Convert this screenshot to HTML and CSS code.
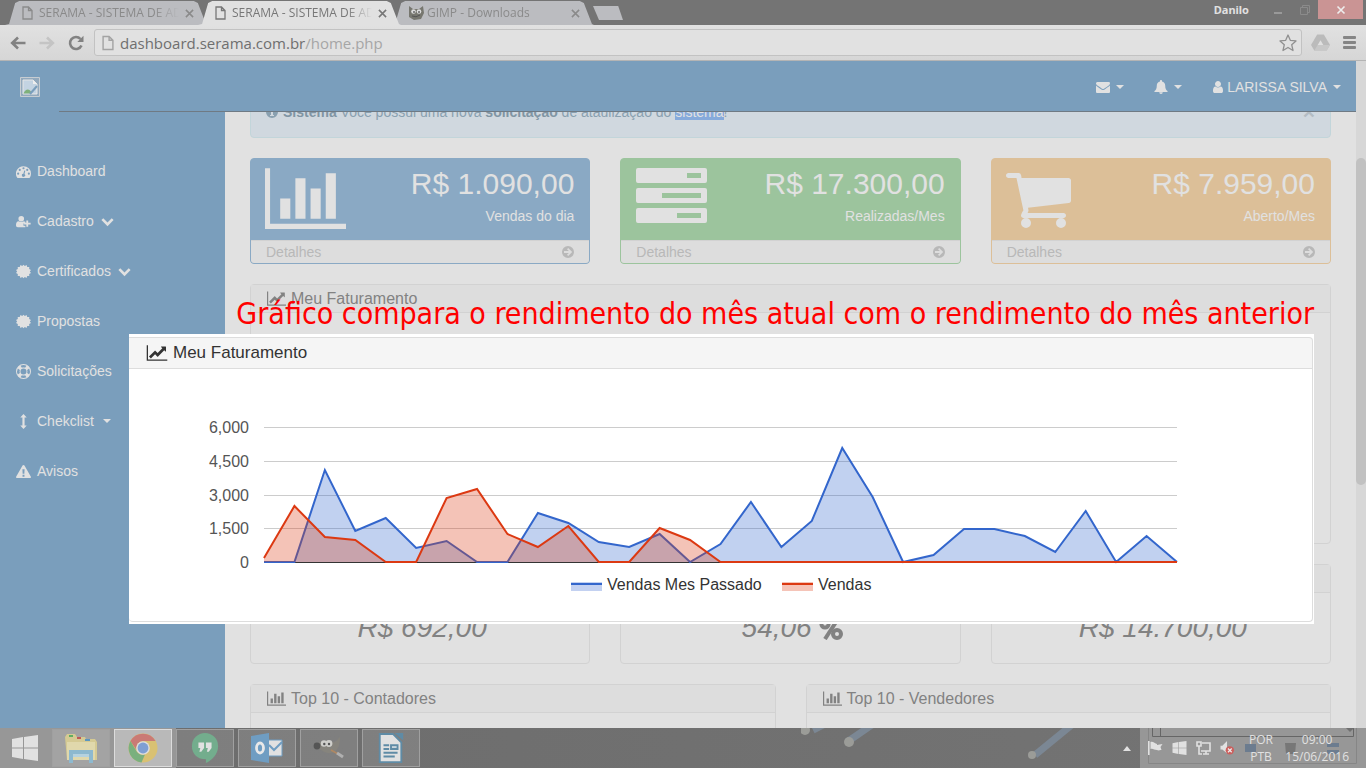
FILE: index.html
```html
<!DOCTYPE html>
<html lang="pt-BR">
<head>
<meta charset="utf-8">
<title>SERAMA - SISTEMA DE ADMINISTRAÇÃO</title>
<link rel="stylesheet" href="styles.css">
</head>
<body>
<svg class="defs" aria-hidden="true">
  <symbol id="bars" viewBox="0 0 2048 1792"><path d="M640 896v512h-256v-512h256zm384-512v1024h-256v-1024h256zm1024 1152v128h-2048v-1536h128v1408h1920zm-640-896v768h-256v-768h256zm384-384v1152h-256v-1152h256z"/></symbol>
  <symbol id="line" viewBox="0 0 2048 1792"><path d="M2048 1536v128h-2048v-1536h128v1408h1920zm-128-1248v435q0 21-19.5 29.5t-35.5-7.5l-121-121-633 633q-10 10-23 10t-23-10l-233-233-416 416-192-192 585-585q10-10 23-10t23 10l233 233 464-464-121-121q-16-16-7.5-35.5t29.5-19.5h435q14 0 23 9t9 23z"/></symbol>
  <symbol id="tasks" viewBox="0 0 71 55"><path fill-rule="evenodd" d="M2 0h67a2 2 0 0 1 2 2v11a2 2 0 0 1-2 2H2a2 2 0 0 1-2-2V2a2 2 0 0 1 2-2zM51 5v5h14V5zM2 20h67a2 2 0 0 1 2 2v11a2 2 0 0 1-2 2H2a2 2 0 0 1-2-2V22a2 2 0 0 1 2-2zM26 25v5h39v-5zM2 40h67a2 2 0 0 1 2 2v11a2 2 0 0 1-2 2H2a2 2 0 0 1-2-2V42a2 2 0 0 1 2-2zM41 45v5h24v-5z"/></symbol>
  <symbol id="cart" viewBox="64 0 1792 1792"><path d="M704 1536q0 52-38 90t-90 38-90-38-38-90 38-90 90-38 90 38 38 90zm896 0q0 52-38 90t-90 38-90-38-38-90 38-90 90-38 90 38 38 90zm128-1088v512q0 24-16.500 42.500t-40.500 21.500l-1044 122q13 60 13 70 0 16-24 64h920q26 0 45 19t19 45-19 45-45 19h-1024q-26 0-45-19t-19-45q0-11 8-31.500t16-36 21.500-40 15.500-29.500l-177-823h-204q-26 0-45-19t-19-45 19-45 45-19h256q16 0 28.500 6.500t19.500 15.500 13 24.500 8 26 5.500 29.500 4.500 26h1201q26 0 45 19t19 45z"/></symbol>
  <symbol id="go" viewBox="0 0 14 14"><path fill-rule="evenodd" d="M7 1a6 6 0 1 1 0 12A6 6 0 0 1 7 1zM7.200 3 6 4.200l1.900 1.900H3v1.800h4.900L6 9.800 7.200 11l4-4z"/></symbol>
  <symbol id="envelope" viewBox="0 0 1792 1792"><path d="M1792 710v794q0 66-47 113t-113 47h-1472q-66 0-113-47t-47-113v-794q44 49 101 87 362 246 497 345 57 42 92.500 65.500t94.500 48 110 24.500h2q51 0 110-24.500t94.500-48 92.500-65.500q170-123 498-345 57-39 100-87zm0-294q0 79-49 151t-122 123q-376 261-468 325-10 7-42.500 31t-54 38.500-52 32.500-57.500 27-50 9h-2q-23 0-50-9t-57.500-27-52-32.500-54-38.500-42.500-31q-91-64-262-182.500t-205-142.500q-62-42-117-115.500t-55-136.500q0-78 41.500-130t118.500-52h1472q65 0 112.500 47t47.500 113z"/></symbol>
  <symbol id="bell" viewBox="0 0 14 14"><path d="M7 0c.6 0 1 .4 1 1v.4c2 .4 3.200 2 3.200 4 0 3 .8 4.400 2.300 5.600.3.500 0 1-.5 1H1c-.5 0-.8-.5-.5-1C2 9.800 2.800 8.400 2.800 5.400c0-2 1.200-3.600 3.200-4V1c0-.6.400-1 1-1zM5.200 12.300h3.600a1.800 1.700 0 0 1-3.600 0z"/></symbol>
  <symbol id="user" viewBox="128 128 1536 1536"><path d="M1536 1399q0 109-62.500 187t-150.500 78h-854q-88 0-150.500-78t-62.500-187q0-85 8.500-160.500t31.500-152 58.500-131 94-89 134.500-34.500q131 128 313 128t313-128q76 0 134.500 34.500t94 89 58.500 131 31.500 152 8.500 160.500zm-256-887q0 159-112.500 271.500t-271.500 112.500-271.500-112.500-112.500-271.500 112.500-271.500 271.500-112.500 271.500 112.500 112.500 271.500z"/></symbol>
  <symbol id="adduser" viewBox="0 0 16 14"><path d="M5.600 1a3 3 0 1 1 0 6 3 3 0 0 1 0-6zM3 6.600c1.600 1.200 3.700 1.200 5.300 0 .7 0 1.200.3 1.700.7V9H8v2.500h2V13H2C.7 13 0 12.300 0 11c0-2.200.6-4.400 3-4.400zM11 6h2v2.200h2.600v2H13v2.300h-2v-2.300H8.600v-2H11z"/></symbol>
  <symbol id="gauge" viewBox="0 0 14 14"><path fill-rule="evenodd" d="M7 2a7 7 0 0 1 7 7c0 1.300-.4 2.600-1 3.700-.2.200-.3.300-.5.300h-11c-.2 0-.4-.1-.5-.3A7 7 0 0 1 7 2zM2 8a1 1 0 1 0 0 2 1 1 0 0 0 0-2zm1.500-3.500a1 1 0 1 0 0 2 1 1 0 0 0 0-2zM7 3a1 1 0 1 0 0 2 1 1 0 0 0 0-2zm3.500 1.500a1 1 0 1 0 0 2 1 1 0 0 0 0-2zM12 8a1 1 0 1 0 0 2 1 1 0 0 0 0-2zM7.700 6l-.8 3a1.500 1.500 0 1 0 1 .3l.8-3z"/></symbol>
  <symbol id="seal" viewBox="0 0 14 14"><path d="M7 .6l1.200 1.300L9.900 1l.6 1.800 1.900 0-.1 1.900 1.700.8L12.900 7l1.100 1.500-1.700.8.1 1.900-1.900 0L9.900 13l-1.700-.9L7 13.400l-1.200-1.300L4.100 13l-.6-1.800-1.900 0 .1-1.900L0 8.500 1.100 7 0 5.500l1.700-.8-.1-1.900 1.900 0L4.100 1l1.700.9z"/></symbol>
  <symbol id="ring" viewBox="0 0 14 14"><path fill-rule="evenodd" d="M7 0a7 7 0 1 1 0 14A7 7 0 0 1 7 0zM7 4.200a2.800 2.800 0 1 0 0 5.600 2.800 2.800 0 0 0 0-5.600zM4.200 1.700l1.300 1.900c.9-.4 2-.4 3 0l1.300-1.900a6 6 0 0 0-5.600 0zm0 10.600a6 6 0 0 0 5.600 0l-1.300-1.900c-1 .4-2.100.4-3 0zM1.700 4.200a6 6 0 0 0 0 5.600l1.900-1.300c-.4-1-.4-2 0-3zm10.600 0-1.900 1.300c.4 1 .4 2 0 3l1.900 1.300a6 6 0 0 0 0-5.600z"/></symbol>
  <symbol id="updown" viewBox="0 0 14 14"><path d="M7 0l3 3.300H8v7.400h2L7 14l-3-3.300h2V3.300H4z"/></symbol>
  <symbol id="warn" viewBox="0 0 14 14"><path fill-rule="evenodd" d="M7 1c.4 0 .7.200.9.500l6 10.500c.3.600 0 1-.8 1H.9c-.8 0-1.100-.4-.8-1l6-10.500c.2-.3.500-.5.9-.5zM6 5l.2 4h1.600L8 5zm.1 5v1.800h1.800V10z"/></symbol>
  <symbol id="chev" viewBox="0 0 16 16"><path d="M3.500 4.500 8 9l4.500-4.500 2 2L8 13 1.500 6.500z"/></symbol>
  <symbol id="page" viewBox="0 0 11 14"><path fill="none" stroke="currentColor" stroke-width="1.300" d="M1 1h5.500L10 4.500V13H1zM6.500 1v3.500H10"/></symbol>
  <symbol id="x" viewBox="0 0 10 10"><path fill="none" stroke="currentColor" stroke-width="1.700" d="M1 1l8 8M9 1L1 9"/></symbol>
  <symbol id="win" viewBox="0 0 26 26"><path d="M0 4l11-2v10.500H0zM12 2l14-2v12.500H12zM0 13.500h11V24L0 22zM12 13.500h14V26l-14-2z"/></symbol>
  <symbol id="wilber" viewBox="0 0 32 24"><path fill="#86847d" d="M3 9c4-4 9-5 14-3 4 1 8-1 9-5l1 1c0 8-3 14-9 15-6 1-9-3-15-6z"/><circle cx="4" cy="10" r="3.400" fill="#555"/><circle cx="11" cy="7.500" r="3.200" fill="#cfcfcb"/><circle cx="16" cy="7.500" r="3.400" fill="#cfcfcb"/><circle cx="11.300" cy="8" r="1.200" fill="#555"/><circle cx="16" cy="8" r="1.200" fill="#555"/><path fill="none" stroke="#b08862" stroke-width="1.600" d="M18 14l7 4"/><path fill="none" stroke="#b0b0b0" stroke-width="3" d="M24 17l6 4"/></symbol>
</svg>

<header class="browser">
  <div class="tabstrip">
    <div class="tabs">
      <div class="tab"><svg class="i-page"><use href="#page"/></svg><span class="tab-name">SERAMA - SISTEMA DE AD</span><button class="tab-x" aria-label="Fechar guia"><svg><use href="#x"/></svg></button></div>
      <div class="tab active"><svg class="i-page"><use href="#page"/></svg><span class="tab-name">SERAMA - SISTEMA DE AD</span><button class="tab-x" aria-label="Fechar guia"><svg><use href="#x"/></svg></button></div>
      <div class="tab"><svg class="i-gimp" viewBox="0 0 16 14"><path fill="#77776f" d="M1 0l4 3h6l4-3 1 7-3 6-7 1-5-3z"/><circle cx="5.500" cy="5.500" r="2.300" fill="#ddd"/><circle cx="11" cy="5.500" r="2.300" fill="#ddd"/><circle cx="6" cy="6" r="1" fill="#666"/><circle cx="11" cy="6" r="1" fill="#666"/><path fill="none" stroke="#555" d="M4 10q4 2 8-1"/></svg><span class="tab-name">GIMP - Downloads</span><button class="tab-x" aria-label="Fechar guia"><svg><use href="#x"/></svg></button></div>
      <button class="newtab" aria-label="Nova guia"></button>
    </div>
    <div class="wincontrols">
      <span class="profile">Danilo</span>
      <button aria-label="Minimizar"><svg viewBox="0 0 10 10"><path stroke="#999" stroke-width="2" d="M1 8h8"/></svg></button>
      <button aria-label="Restaurar"><svg viewBox="0 0 10 10"><path fill="none" stroke="#8b8b8b" d="M.5 2.500h7v7h-7zM2.500 2V.5h7v7H8"/></svg></button>
      <button class="close" aria-label="Fechar"><svg viewBox="0 0 10 10"><path stroke="#eee" stroke-width="1.600" d="M1.500 1.500l7 7M8.500 1.500l-7 7"/></svg></button>
    </div>
  </div>
  <div class="toolbar">
    <button class="nav" aria-label="Voltar"><svg viewBox="0 0 16 16"><path fill="none" stroke="#828282" stroke-width="2.600" d="M15.500 8H2M8 2.500L2.200 8 8 13.500"/></svg></button>
    <button class="nav" aria-label="Avançar"><svg viewBox="0 0 16 16"><path fill="none" stroke="#c4c4c4" stroke-width="2.600" d="M.5 8H14M8 2.500L13.800 8 8 13.500"/></svg></button>
    <button class="nav" aria-label="Recarregar"><svg viewBox="0 0 16 16"><path fill="none" stroke="#828282" stroke-width="2.600" d="M13.500 10.500A6 6 0 1 1 12.500 4"/><path fill="#828282" d="M15.500.8V7H9.300z"/></svg></button>
    <div class="omnibox"><svg class="i-doc"><use href="#page"/></svg><span class="url">dashboard.serama.com.br<span>/home.php</span></span><svg class="i-star" viewBox="0 0 18 18"><path fill="none" stroke="#909090" stroke-width="1.300" stroke-linejoin="round" d="M9 1l2.300 5.300 5.700.6-4.300 3.800 1.300 5.800L9 13.500l-5 3 1.300-5.800L1 6.900l5.700-.6z"/></svg></div>
    <svg class="i-drive" viewBox="0 0 20 17"><path fill="#bbb" d="M6.500 0h7l6.500 11-3.500 6h-13L0 11z"/><path fill="#c8c8c8" d="M3.500 17L7 11h13l-3.500 6z"/><path fill="#e0e0e0" d="M10 6l3 5H7z"/></svg>
    <button class="menu" aria-label="Menu"><i></i><i></i><i></i></button>
  </div>
</header>

<div class="view">
  <div class="app">
    <nav class="topbar">
      <svg class="brand" viewBox="0 0 20 20"><path fill="#92a9bd" stroke="#c7cdd2" d="M.5.5h19v19H.5z"/><path fill="#c3d3e2" stroke="#e6e6e6" d="M3 3h10l4 4v10H3z"/><path fill="#7fb07b" d="M3.500 16.500c2-5 6-5 8-1l-1 1z"/><path stroke="#7a9ebc" stroke-width="2" d="M17 9l-7 8"/><path fill="#eee" d="M13 3v4h4z"/></svg>
      <div class="toplinks">
        <a href="#"><svg><use href="#envelope"/></svg><b class="caret"></b></a>
        <a href="#"><svg><use href="#bell"/></svg><b class="caret"></b></a>
        <a href="#" class="who"><svg><use href="#user"/></svg>LARISSA SILVA<b class="caret"></b></a>
      </div>
    </nav>
    <div class="body">
      <nav class="side">
        <a href="#"><svg><use href="#gauge"/></svg>Dashboard</a>
        <a href="#"><svg><use href="#adduser"/></svg>Cadastro<svg><use href="#chev"/></svg></a>
        <a href="#"><svg><use href="#seal"/></svg>Certificados<svg><use href="#chev"/></svg></a>
        <a href="#"><svg><use href="#seal"/></svg>Propostas</a>
        <a href="#"><svg><use href="#ring"/></svg>Solicitações</a>
        <a href="#"><svg><use href="#updown"/></svg>Chekclist<b class="caret"></b></a>
        <a href="#"><svg><use href="#warn"/></svg>Avisos</a>
      </nav>
      <main class="main">
        <div class="alert"><svg viewBox="1 0 12 14"><path fill-rule="evenodd" d="M7 1a6 6 0 1 1 0 12A6 6 0 0 1 7 1zM6 3v1.800h2V3zM5 6v1h1v3H5v1h4v-1H8V6z"/></svg><p><strong>Sistema</strong> Você possui uma nova <strong>solicitação</strong> de ataulização do <mark>sistema</mark>!</p><button aria-label="Fechar aviso">×</button></div>
        <div class="grid three">
          <section class="card blue"><div class="card-top"><svg class="big"><use href="#bars"/></svg><div><div class="sum">R$ 1.090,00</div><div>Vendas do dia</div></div></div><a href="#" class="card-foot">Detalhes<svg><use href="#go"/></svg></a></section>
          <section class="card green"><div class="card-top"><svg class="big tasks"><use href="#tasks"/></svg><div><div class="sum">R$ 17.300,00</div><div>Realizadas/Mes</div></div></div><a href="#" class="card-foot">Detalhes<svg><use href="#go"/></svg></a></section>
          <section class="card orange"><div class="card-top"><svg class="big cart"><use href="#cart"/></svg><div><div class="sum">R$ 7.959,00</div><div>Aberto/Mes</div></div></div><a href="#" class="card-foot">Detalhes<svg><use href="#go"/></svg></a></section>
        </div>
        <section class="panel tall"><h3><svg><use href="#line"/></svg>Meu Faturamento</h3></section>
        <div class="grid three">
          <section class="panel mid"><h3></h3><p>R$ 692,00</p></section>
          <section class="panel mid"><h3></h3><p>54,06 <svg viewBox="0 0 24 22"><g fill="none" stroke="currentColor" stroke-width="4"><circle cx="6" cy="6" r="3.600"/><circle cx="18" cy="16" r="4"/><path d="M19 1L6 21"/></g></svg></p></section>
          <section class="panel mid"><h3></h3><p>R$ 14.700,00</p></section>
        </div>
        <div class="grid two">
          <section class="panel tall"><h3><svg><use href="#bars"/></svg>Top 10 - Contadores</h3></section>
          <section class="panel tall"><h3><svg><use href="#bars"/></svg>Top 10 - Vendedores</h3></section>
        </div>
      </main>
    </div>
  </div>
  <div class="scroll"><div class="thumb"></div></div>

  <figure class="callout">
    <figcaption>Gráfico compara o rendimento do mês atual com o rendimento do mês anterior</figcaption>
    <div class="sheet">
      <h2><svg><use href="#line"/></svg>Meu Faturamento</h2>
      <svg class="chart" viewBox="0 0 1183 252" role="img" aria-label="Vendas e vendas do mês passado">
        <g stroke="#ccc"><path d="M135 58.500h913M135 92.500h913M135 126.500h913M135 159.500h913"/><path stroke="#333" d="M135 193.500h913"/></g>
        <g class="axis" text-anchor="end"><text x="120" y="64">6,000</text><text x="120" y="98">4,500</text><text x="120" y="132">3,000</text><text x="120" y="165">1,500</text><text x="120" y="199">0</text></g>
        <g id="series"></g>
        <g class="legend"><path fill="#c3d1f1" d="M442 213h31v9h-31z"/><path stroke="#36c" stroke-width="2" d="M442 215h31"/><text x="478" y="221">Vendas Mes Passado</text><path fill="#f5c4b8" d="M653 213h31v9h-31z"/><path stroke="#dc3912" stroke-width="2" d="M653 215h31"/><text x="689" y="221">Vendas</text></g>
      </svg>
    </div>
  </figure>
</div>

<footer class="taskbar">
  <svg class="wall" viewBox="0 0 400 40"><g stroke="#7b8794" stroke-width="7"><path d="M46 14L78-8M12 2l24-12M234 27l44-36"/></g><g fill="#9b9c98"><circle cx="4" cy="2" r="5"/><circle cx="48" cy="14" r="5"/><circle cx="231" cy="27" r="4"/></g></svg>
  <button class="start" aria-label="Iniciar"><svg><use href="#win"/></svg></button>
  <button class="app-btn" aria-label="Explorador"><svg viewBox="0 0 32 30"><path fill="#d5ca93" d="M0 4l2-3h8l2 3h8l1 2h9l2 3v18H2z"/><path fill="#e0d8ac" d="M2 9h28v18H2z"/><path fill="#5fae63" d="M4 2h4v2H4z"/><path fill="#c05a55" d="M12 4h4v2h-4z"/><path fill="#5c97bf" d="M20 6h5v2h-5z"/><path fill="none" stroke="#8db9cf" stroke-width="4" d="M6 30V19h20v11"/><path fill="#b5d2df" d="M8 21h16v3H8z"/></svg></button>
  <button class="app-btn on" aria-label="Chrome"><svg viewBox="0 0 30 30"><circle cx="15" cy="15" r="14.500" fill="#d9c173"/><path fill="#ca7a75" d="M2.400 8A14.500 14.500 0 0 1 27.600 8H15a7 7 0 0 0-6.500 9z"/><path fill="#7ab07e" d="M2.400 8 9 19a7 7 0 0 0 8 2.500l-3.500 8A14.500 14.500 0 0 1 2.400 8z"/><circle cx="15" cy="15" r="6.800" fill="#ddd"/><circle cx="15" cy="15" r="5.400" fill="#7f9fd3"/></svg></button>
  <button class="app-btn" aria-label="Hangouts"><svg viewBox="0 0 30 32"><path fill="#73ad8d" d="M15 0a14 14 0 0 1 14 14c0 9-7 15-13 18v-4C7 28 1 22 1 14A14 14 0 0 1 15 0z"/><path fill="#e1e1e1" d="M8 10h6v6l-3 4H9l1-4H8zM16 10h6v6l-3 4h-2l1-4h-2z"/></svg></button>
  <button class="app-btn" aria-label="Outlook"><svg viewBox="0 0 32 30"><path fill="#e1e1e1" stroke="#6f9dc2" d="M16 7h15v16H16z"/><path fill="none" stroke="#6f9dc2" stroke-width="2" d="M18 12l5 5 8-8"/><path fill="#6f9dc2" d="M0 3l18-3v30L0 27z"/><ellipse cx="9" cy="15" rx="3.500" ry="5" fill="none" stroke="#e8e8e8" stroke-width="2.800"/></svg></button>
  <button class="app-btn" aria-label="GIMP"><svg><use href="#wilber"/></svg></button>
  <button class="app-btn" aria-label="Writer"><svg viewBox="0 0 30 32"><path fill="#e1e1e1" stroke="#5f8ba5" stroke-width="2" d="M3 1h14l9 9v21H3z"/><path fill="#5f8ba5" d="M19 0h9v8zM7 12h6v2H7zM7 16h6v2H7zM7 20h15v2H7zM7 24h12v2H7zM14 12h9v6h-9z"/><path fill="#c9d5dc" d="M16 14h5v2h-5z"/></svg></button>
  <div class="tray">
    <svg class="up" viewBox="0 0 8 5"><path fill="#e1e1e1" d="M0 5l4-5 4 5z"/></svg>
    <div class="tray-box">
      <svg class="ghost" viewBox="0 0 226 40"><g fill="none"><path stroke="#868686" d="M8.500 0v35.500h208V0"/><path stroke="#666" d="M12.500 0v8.500h201V0M20.500 0v8"/></g><path fill="#707070" d="M206 0h8l-4 4z"/><path fill="#777" d="M145 15h11l-1 11h-9z"/><path fill="#6c7c8f" d="M187 15h12v4h-12zM187 22h12v4h-12zM105 16h11v8h-11z"/></svg>
      <svg viewBox="0 0 15 14"><path fill="#e1e1e1" d="M0 0h1.600v14H0zM2.500 1C5 0 7 3 9 3V9C6 9 5 7 2.500 8zM9 4c2 0 3-1 5.500-1l-2 3 1 3c-2 0-3 1-4.500 0z"/></svg>
      <svg class="t-win"><use href="#win"/></svg>
      <svg viewBox="0 0 15 14"><path fill="none" stroke="#e1e1e1" stroke-width="1.600" d="M6 2h8v8H5M7 13h6M10 10v3M1 1h4v4H1zM3 5v8h3"/></svg>
      <svg viewBox="0 0 15 15"><path fill="#e1e1e1" d="M0 5h2l5-5v13L2 9H0z"/><circle cx="10" cy="10" r="4.500" fill="#cb5f5d"/><path stroke="#eee" stroke-width="1.300" d="M8 8l4 4M12 8l-4 4"/></svg>
      <div class="stack lang"><span>POR</span><span>PTB</span></div>
      <div class="stack clock"><span>09:00</span><span>15/06/2016</span></div>
    </div>
  </div>
</footer>
<script src="chart.js"></script>
</body>
</html>
```
FILE: styles.css
```css
* { box-sizing: border-box; }
body { margin: 0; height: 100vh; display: flex; flex-direction: column; overflow: hidden; font: 14px/20px "Liberation Sans", Arial, sans-serif; background: #e1e1e1; color: #828282; }
button { border: 0; padding: 0; background: none; color: inherit; font: inherit; }
a { color: inherit; text-decoration: none; }
svg { fill: currentColor; flex: none; }
h2, h3, p, figure { margin: 0; font-weight: normal; }
.defs { display: none; }

/* browser chrome */
.browser { flex: none; font-family: "Open Sans", "Noto Sans", sans-serif; }
.tabstrip { display: flex; justify-content: space-between; height: 25px; background: #747474; }
.tabs { display: flex; align-items: flex-end; padding-left: 5px; }
.tab { display: flex; align-items: center; gap: 6px; width: 203px; height: 24px; margin-right: -10px; padding: 0 9px 0 17px; background: #bbbcc0; color: #8a8a8a; clip-path: polygon(0 100%, 2% 96%, 5% 8%, 7% 0, 93% 0, 95% 8%, 99% 96%, 100% 100%); font-size: 12px; line-height: 24px; }
.tab.active { z-index: 1; background: #e1e1e1; color: #777; }
.i-page { width: 11px; height: 14px; }
.i-gimp { width: 16px; height: 14px; margin-right: -3px; }
.tab-name { flex: 1; overflow: hidden; white-space: nowrap; mask-image: linear-gradient(90deg, #000 82%, transparent); }
.tab-x { display: flex; padding: 0 5px 0 0; }
.tab-x svg { width: 9px; height: 9px; }
.newtab { width: 30px; height: 14px; margin: 0 0 5px 9px; background: #bbbcc0; clip-path: polygon(0 0, 84% 0, 100% 100%, 20% 100%); }
.wincontrols { display: flex; align-items: flex-start; padding-right: 3px; }
.profile { margin-right: 15px; color: #e1e1e1; font: bold 11px/19px "Noto Sans", sans-serif; }
.wincontrols button { display: flex; align-items: center; justify-content: center; width: 27px; height: 19px; }
.wincontrols button svg { width: 10px; height: 10px; }
.wincontrols .close { width: 45px; background: #ca9494; }
.toolbar { display: flex; align-items: center; height: 36px; padding: 0 10px 0 10px; gap: 13px; border-bottom: 1px solid #b4b4b4; background: linear-gradient(#e1e1e1, #d6d6d6); }
.nav { display: flex; }
.nav svg { width: 16px; height: 16px; }
.omnibox { flex: 1; display: flex; align-items: center; gap: 6px; height: 27px; margin-left: -3px; padding: 0 4px 0 7px; border: 1px solid #c2c2c2; border-radius: 3px; background: #e1e1e1; }
.i-doc { width: 12px; height: 16px; color: #a3a3a3; }
.url { flex: 1; color: #6f6f6f; font-size: 15px; }
.url span { color: #a6a6a6; }
.i-star { width: 18px; height: 18px; }
.i-drive { width: 19px; height: 17px; margin-left: -4px; }
.menu { display: grid; gap: 2px; }
.menu i { width: 13px; height: 3px; border-radius: 1px; background: #858585; }

/* application */
.view { flex: 1; min-height: 0; display: flex; position: relative; }
.app { flex: 1; min-width: 0; display: flex; flex-direction: column; }
.topbar { flex: none; display: flex; align-items: center; justify-content: space-between; height: 51px; padding: 0 15px 0 20px; background: linear-gradient(#6f7a84, #6f7a84) 59px 100% / 100% 1px no-repeat #7a9ebc; color: #e1e1e1; }
.brand { width: 20px; height: 20px; }
.toplinks { display: flex; gap: 30px; }
.toplinks a { display: flex; align-items: center; gap: 6px; }
.toplinks svg { width: 14px; height: 14px; }
.toplinks .who { gap: 3px; }
.who svg { width: 12px; height: 12px; }
.who .caret { margin-left: 3px; }
.caret { border: 4px solid transparent; border-top-color: currentColor; border-bottom: 0; }
.body { flex: 1; min-height: 0; display: flex; }
.side { flex: none; width: 225px; padding-top: 34px; background: #7a9ebc; color: #e1e1e1; }
.side a { display: flex; align-items: center; gap: 6px; height: 50px; padding-left: 16px; }
.side svg { width: 15px; height: 15px; }
.side .caret { margin-left: 3px; }
.main { flex: 1; min-width: 0; overflow: hidden; padding: 0 25px; }
.alert { display: flex; gap: 5px; height: 52px; margin: -26px 0 20px; padding: 15px; border: 1px solid #c2d5da; border-radius: 4px; background: #d0d8df; color: #89a0b0; }
.alert svg { width: 12px; height: 14px; margin-top: 3px; }
.alert p { flex: 1; }
.alert strong { color: #8095a4; }
.alert mark { background: #86aadb; color: #e1e1e1; }
.alert button { color: #b3bcc3; font-size: 21px; line-height: 18px; font-weight: bold; }
.grid { display: grid; gap: 30px; margin-bottom: 20px; }
.three { grid-template-columns: repeat(3, 1fr); }
.two { grid-template-columns: repeat(2, 1fr); }
.card { border: 1px solid; border-radius: 4px; overflow: hidden; }
.blue { border-color: #8aa9c4; background: #8aa9c4; }
.green { border-color: #9cc49d; background: #9cc49d; }
.orange { border-color: #dcbf98; background: #dcbf98; }
.card-top { display: flex; justify-content: space-between; align-items: flex-start; height: 81px; padding: 4px 15px 4px 14px; color: #e1e1e1; text-align: right; }
.big { width: 81px; height: 71px; }
.tasks { width: 71px; height: 55px; margin: 5px 0 0 1px; }
.cart { width: 70px; height: 70px; }
.sum { margin-bottom: 1px; font-size: 30px; line-height: 42px; }
.card-foot { display: flex; align-items: center; justify-content: space-between; height: 23px; padding: 0 14px 0 15px; border-top: 1px solid #d2d2d2; background: #ddd; color: #b8b8b8; }
.card-foot svg { width: 14px; height: 14px; }
.panel { border: 1px solid #d2d2d2; border-radius: 4px; margin-bottom: 20px; }
.grid .panel { margin-bottom: 0; }
.panel h3 { display: flex; align-items: center; gap: 5px; height: 28px; padding-left: 16px; border-bottom: 1px solid #d2d2d2; background: #ddd; font-size: 16px; }
.panel h3 svg { width: 19px; height: 17px; }
.tall { height: 260px; }
.mid { height: 100px; }
.mid p { padding: 15px 0 0 4px; font-size: 28px; line-height: 40px; font-style: italic; text-align: center; }
.mid svg { width: 24px; height: 22px; vertical-align: -3px; }
.scroll { flex: none; width: 10px; padding-top: 97px; background: #d7d7d7; }
.thumb { height: 58%; max-height: 327px; border-radius: 5px; background: #c1c1c1; }

/* annotation laid over the page */
.callout { position: absolute; left: 129px; right: 52px; top: 233px; }
.callout figcaption { height: 40px; color: #f00; font: 30px/40px "DejaVu Sans Condensed", "DejaVu Sans", sans-serif; text-align: right; white-space: nowrap; }
.sheet { padding: 3px 1px 2px 0; background: #fff; color: #333; }
.sheet h2 { display: flex; align-items: center; gap: 5px; height: 32px; padding-left: 17px; border: 1px solid #ddd; border-left: 0; border-radius: 0 4px 0 0; background: #f5f5f5; font-size: 17px; }
.sheet h2 svg { width: 22px; height: 18px; }
.chart { display: block; width: 100%; border: 1px solid #ddd; border-width: 0 1px 1px 0; border-radius: 0 0 4px 4px; font-size: 16px; }
.axis { fill: #555; }
.legend { fill: #333; }

/* taskbar */
.taskbar { flex: none; display: flex; align-items: center; gap: 4px; height: 40px; position: relative; background: linear-gradient(90deg, #979797 176px, #6d6d6d 176px, #747474); color: #e1e1e1; }
.wall { position: absolute; left: 801px; top: 0; width: 400px; height: 40px; overflow: hidden; }
.start { display: flex; width: 48px; padding-left: 12px; }
.start svg { width: 26px; height: 26px; }
.app-btn { display: flex; align-items: center; justify-content: center; width: 58px; height: 38px; border: 1px solid #a0a0a0; background: rgba(255, 255, 255, .12); }
.app-btn.on { border-color: #dcdcdc; background: #b9b9b9; }
.app-btn svg { width: 32px; height: 30px; }
.tray { position: relative; display: flex; align-items: center; gap: 9px; margin-left: auto; font: 12px/17px "Open Sans", "Noto Sans", sans-serif; }
.up { width: 8px; height: 5px; }
.tray-box { position: relative; z-index: 0; display: flex; align-items: center; gap: 9px; width: 226px; height: 40px; padding: 0 17px 0 8px; background: #979797; }
.tray-box > svg { width: 15px; height: 14px; }
.tray-box > .ghost { position: absolute; z-index: -1; left: 0; top: 0; width: 226px; height: 40px; }
.stack { display: grid; text-align: center; }
.lang { margin-left: 5px; }
.clock { flex: 1; justify-content: end; }
```
FILE: chart.js
```js
const months = [
  { color: '#3366cc', y: [193, 193, 101, 162, 149, 179, 172, 193, 193, 144, 154, 173, 178, 165, 193, 175, 133, 178, 152, 79, 128, 193, 186, 160, 160, 167, 183, 142, 193, 167, 193] },
  { color: '#dc3912', y: [189, 137, 168, 171, 193, 193, 129, 120, 165, 178, 157, 193, 193, 159, 171, 193, 193, 193, 193, 193, 193, 193, 193, 193, 193, 193, 193, 193, 193, 193, 193] }
];
const step = 913 / 30;
document.getElementById('series').innerHTML = months.map(({ color, y }) => {
  const points = y.map((v, i) => `${135 + i * step},${v}`).join(' ');
  return `<polygon fill="${color}" fill-opacity=".3" points="135,193 ${points} 1048,193"/><polyline fill="none" stroke="${color}" stroke-width="2" points="${points}"/>`;
}).join('');
```
